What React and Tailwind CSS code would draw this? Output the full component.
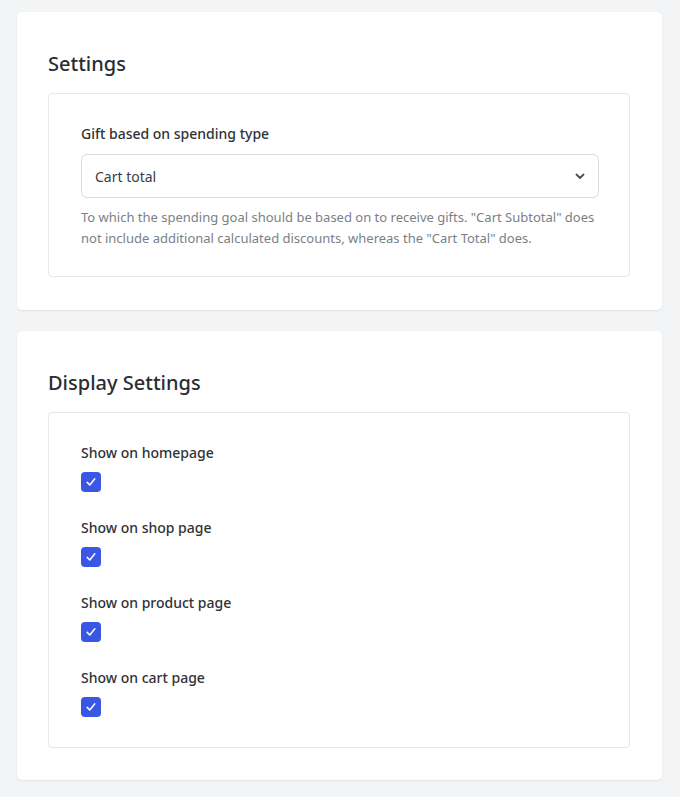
import React from "react";

function Check({ label }) {
  return (
    <div className="flex flex-col">
      <div className="text-[14px] leading-[20px] font-medium text-[#2f3237]">{label}</div>
      <div className="mt-[9px] w-[20px] h-[20px] rounded-[4px] bg-[#3a56e4] flex items-center justify-center">
        <svg width="12" height="12" viewBox="0 0 12 12" fill="none">
          <path d="M2.2 6.4 L4.8 9 L9.8 2.8" stroke="white" strokeWidth="1.5" strokeLinecap="round" strokeLinejoin="round" />
        </svg>
      </div>
    </div>
  );
}

export default function App() {
  return (
    <div
      className="min-h-[797px] bg-[#f3f4f6] pt-[12px] pb-[17px] pl-[17px] pr-[18px] flex flex-col gap-[21px]"
      style={{ fontFamily: '"Noto Sans", "Open Sans", sans-serif' }}
    >
      <div className="bg-white rounded-[5px] shadow-[0_1px_2px_rgba(0,0,0,0.08)] pt-[38px] pb-[33px] pl-[31px] pr-[32px]">
        <h2 className="text-[20px] leading-[28px] font-medium text-[#2a2d31]">Settings</h2>
        <div className="mt-[15px] border border-[#e5e7eb] rounded-[4px] pt-[30px] pb-[27px] pl-[32px] pr-[30px]">
          <div className="text-[14px] leading-[20px] font-medium text-[#2f3237]">Gift based on spending type</div>
          <div className="mt-[10px] h-[44px] border border-[#d9dce1] rounded-[6px] flex items-center justify-between pl-[13px] pr-[12px]">
            <span className="text-[14px] text-[#3a3d42]">Cart total</span>
            <svg width="12" height="12" viewBox="0 0 12 12" fill="none">
              <path d="M2.5 4.5 L6 8 L9.5 4.5" stroke="#4b4f55" strokeWidth="1.8" strokeLinecap="round" strokeLinejoin="round" />
            </svg>
          </div>
          <p className="mt-[9px] text-[13px] leading-[21px] text-[#7a7f87]">
            To which the spending goal should be based on to receive gifts. "Cart Subtotal" does not include additional calculated discounts, whereas the "Cart Total" does.
          </p>
        </div>
      </div>

      <div className="bg-white rounded-[5px] shadow-[0_1px_2px_rgba(0,0,0,0.08)] pt-[38px] pb-[32px] pl-[31px] pr-[32px]">
        <h2 className="text-[20px] leading-[28px] font-medium text-[#2a2d31]">Display Settings</h2>
        <div className="mt-[15px] border border-[#e5e7eb] rounded-[4px] pt-[30px] pb-[30px] pl-[32px] pr-[30px] flex flex-col gap-[26px]">
          <Check label="Show on homepage" />
          <Check label="Show on shop page" />
          <Check label="Show on product page" />
          <Check label="Show on cart page" />
        </div>
      </div>
    </div>
  );
}
